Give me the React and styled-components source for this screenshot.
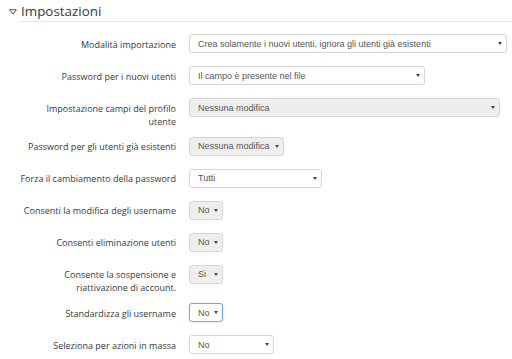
import React from "react";
import styled, { createGlobalStyle } from "styled-components";

const Global = createGlobalStyle`
  html, body { margin: 0; padding: 0; background: #fff; }
  body { font-family: "Open Sans", "Liberation Sans", sans-serif; color: #373a3c; }
`;

const Page = styled.div`
  width: 512px;
  height: 359px;
  overflow: hidden;
`;

const Legend = styled.div`
  display: flex;
  align-items: center;
  gap: 4px;
  padding: 2px 0 0 9px;
  height: 19px;
  font-size: 13.4px;
  line-height: 19px;
  color: #373a3c;
`;

const Rule = styled.div`
  margin-left: 20px;
  height: 1px;
  background: #e5e5e5;
  margin-bottom: 12px;
`;

const Form = styled.div`
  display: flex;
  flex-direction: column;
`;

const Row = styled.div`
  display: grid;
  grid-template-columns: 176px 1fr;
  column-gap: 13px;
  align-items: start;
`;

const Label = styled.div`
  font-size: 9px;
  line-height: 13px;
  text-align: right;
  padding-top: 3.5px;
  padding-bottom: 9px;
  color: #373a3c;
`;

const Select = styled.div`
  box-sizing: border-box;
  width: ${(p) => p.$w}px;
  height: 19px;
  margin-bottom: 13px;
  display: flex;
  align-items: center;
  justify-content: space-between;
  gap: 4px;
  padding: 0 4px 0 8px;
  border: 1px solid ${(p) => (p.$focus ? "#66afe9" : "#d6d6d6")};
  border-radius: 3px;
  background: ${(p) => (p.$disabled ? "#eeeeee" : "#fff")};
  box-shadow: ${(p) => (p.$focus ? "0 0 2px rgba(102,175,233,0.5)" : "none")};
  font-family: "Liberation Sans", Arial, sans-serif;
  font-size: 9px;
  color: #555;
  white-space: nowrap;
`;

const Arrow = () => (
  <svg width="4" height="3" viewBox="0 0 4 3">
    <path d="M0 0 L4 0 L2 3 Z" fill="#444" />
  </svg>
);

const rows = [
  { label: ["Modalità importazione"], value: "Crea solamente i nuovi utenti, ignora gli utenti già esistenti", w: 318 },
  { label: ["Password per i nuovi utenti"], value: "Il campo è presente nel file", w: 236 },
  { label: ["Impostazione campi del profilo", "utente"], value: "Nessuna modifica", w: 311, disabled: true },
  { label: ["Password per gli utenti già esistenti"], value: "Nessuna modifica", w: 95, disabled: true },
  { label: ["Forza il cambiamento della password"], value: "Tutti", w: 133 },
  { label: ["Consenti la modifica degli username"], value: "No", w: 34, disabled: true },
  { label: ["Consenti eliminazione utenti"], value: "No", w: 34, disabled: true },
  { label: ["Consente la sospensione e", "riattivazione di account."], value: "Si", w: 34, disabled: true },
  { label: ["Standardizza gli username"], value: "No", w: 34, focus: true },
  { label: ["Seleziona per azioni in massa"], value: "No", w: 85 },
];

export default function App() {
  return (
    <Page>
      <Global />
      <Legend>
        <svg width="8" height="6" viewBox="0 0 8 6">
          <path d="M0.7 0.7 L7.3 0.7 L4 5.2 Z" fill="none" stroke="#555" strokeWidth="1" strokeLinejoin="round" />
        </svg>
        <span>Impostazioni</span>
      </Legend>
      <Rule />
      <Form>
        {rows.map((r, i) => (
          <Row key={i}>
            <Label>
              {r.label.map((l, j) => (
                <div key={j}>{l}</div>
              ))}
            </Label>
            <Select $w={r.w} $disabled={r.disabled} $focus={r.focus}>
              <span>{r.value}</span>
              <Arrow />
            </Select>
          </Row>
        ))}
      </Form>
    </Page>
  );
}
